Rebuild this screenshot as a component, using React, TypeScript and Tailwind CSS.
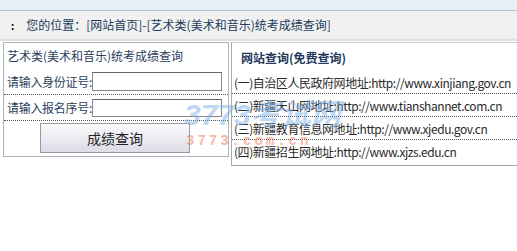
const font = "font-['Microsoft_YaHei','Noto_Sans_CJK_SC',sans-serif]";

const sites = [
  '(一)自治区人民政府网地址:http://www.xinjiang.gov.cn',
  '(二)新疆天山网地址:http://www.tianshannet.com.cn',
  '(三)新疆教育信息网地址:http://www.xjedu.gov.cn',
  '(四)新疆招生网地址:http://www.xjzs.edu.cn',
];

export default function App() {
  return (
    <div className={`relative w-[517px] h-[251px] bg-white overflow-hidden text-[12px] ${font}`}>
      <div className="h-[11px] bg-[#e8eef5] border-b border-[#b8c0c8]" />
      <div className="h-[30px] bg-[#f1f1f1] border-b-2 border-[#e0e0e0] flex items-center pl-[11px]">
        <span className="text-[10px] text-black font-bold mr-[12px]">:</span>
        <span className="text-[#223a5e]">您的位置：[网站首页]-[艺术类(美术和音乐)统考成绩查询]</span>
      </div>

      <div className="flex items-start gap-[2px] pl-[3px] pt-[1px]">
        <div className="w-[226px] shrink-0 h-[115px] border border-[#aab4bf] text-[#2c3e5c]">
          <div className="h-[26px] pl-[3px] pt-[4px] whitespace-nowrap">艺术类(美术和音乐)统考成绩查询</div>
          <div className="flex items-center h-[26px] pl-[3px] border-b border-dotted border-[#555]">
            <span className="shrink-0 whitespace-nowrap tracking-[-0.3px]">请输入身份证号:</span>
            <input className="w-[130px] shrink-0 h-[19px] border border-[#888] border-t-[#666] bg-white" />
          </div>
          <div className="flex items-center h-[26px] pl-[3px] border-b border-dotted border-[#555]">
            <span className="shrink-0 whitespace-nowrap tracking-[-0.3px]">请输入报名序号:</span>
            <input className="w-[130px] shrink-0 h-[18px] border border-[#888] border-t-[#666] bg-white" />
          </div>
          <div className="pl-[36px] pt-[2px]">
            <button className="w-[150px] h-[30px] border border-[#9a9aa6] bg-gradient-to-b from-[#fbfbfd] to-[#dcdce6] text-[14px] text-[#222]">
              成绩查询
            </button>
          </div>
        </div>

        <div className="flex-1 min-w-0 h-[124px] border border-[#a8a8a8] border-t-[#c8c8c8] border-r-0 text-[#2a2a2a] overflow-hidden">
          <div className="h-[28px] pl-[9px] pt-[6px] font-bold text-[#243a5c]">网站查询(免费查询)</div>
          {sites.map((s, i) => (
            <div
              key={i}
              className={`h-[23px] pl-[2px] pt-[3px] whitespace-nowrap tracking-[-0.45px] ${i < 3 ? 'border-b border-dotted border-[#555]' : ''}`}
            >
              {s}
            </div>
          ))}
        </div>
      </div>

      {/* watermark */}
      <div className="absolute left-[184px] top-[99px] pointer-events-none opacity-50 italic font-bold text-[30px] leading-[32px] text-[#7fb0e6] font-['Liberation_Sans','Noto_Sans_CJK_SC',sans-serif]">
        3773考试网
      </div>
      <div className="absolute left-[186px] top-[134px] pointer-events-none opacity-60 font-bold text-[14px] leading-[14px] tracking-[3px] text-[#f08a6a] font-['Liberation_Mono',monospace]">
        3773.com.cn
      </div>
    </div>
  );
}
